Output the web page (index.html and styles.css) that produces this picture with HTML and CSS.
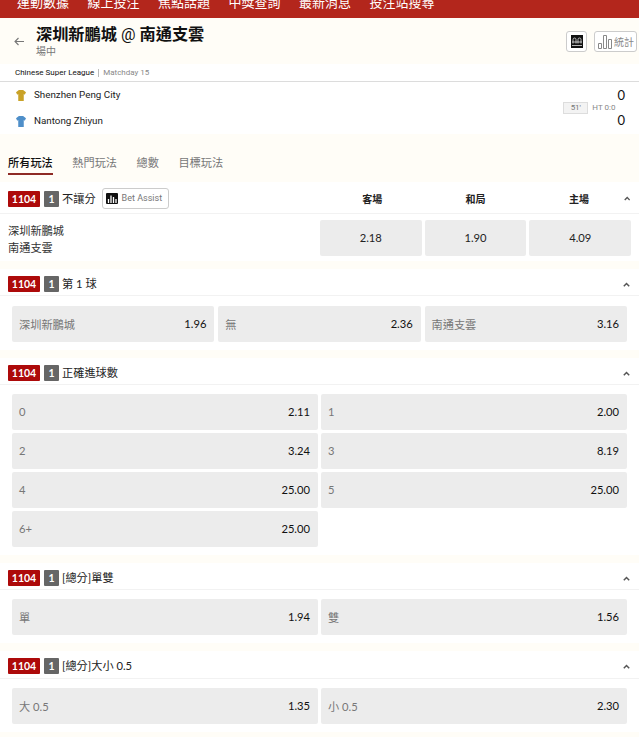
FILE: index.html
```html
<!DOCTYPE html>
<html lang="zh-Hant">
<head>
<meta charset="utf-8">
<title>深圳新鵬城 @ 南通支雲</title>
<link rel="stylesheet" href="styles.css">
</head>
<body>
<nav class="nav">
  <a>運動數據</a><a>線上投注</a><a>焦點話題</a><a>中獎查詢</a><a>最新消息</a><a>投注站搜尋</a>
</nav>
<header class="head">
  <svg class="back" width="10" height="9" viewBox="0 0 10 9"><path d="M10 4.500H1M4.500 1 1 4.500 4.500 8" fill="none" stroke="#777" stroke-width="1.100"/></svg>
  <div class="head-title">
    <h1>深圳新鵬城 <span class="at">@</span> 南通支雲</h1>
    <div class="status">場中</div>
  </div>
  <div class="head-tools">
    <span class="tool tool-icon"><svg width="12" height="13" viewBox="0 0 12 13"><rect width="12" height="13" fill="#111"/><path d="M1 10.500h10M2 8.500V4.500a1.500 1.500 0 0 1 3 0v4M7 8.500V4.500a1.500 1.500 0 0 1 3 0v4M1 7h10" fill="none" stroke="#ddd" stroke-width=".8"/></svg></span>
    <span class="tool tool-stats"><svg width="14" height="14" viewBox="0 0 14 14"><path d="M.5 8.500h3v5h-3zM5.500 .5h3v13h-3zM10.500 4.500h3v9h-3z" fill="none" stroke="#888"/></svg>統計</span>
  </div>
</header>
<div class="league"><b>Chinese Super League</b><i></i>Matchday 15</div>
<section class="match">
  <div class="teams">
    <div class="team"><svg width="10" height="13" viewBox="0 0 12 13"><path d="M3.500 0h5l3.500 2.500-1.500 3-1.200-.7V13H2.700V4.800L1.500 5.500 0 2.500z" fill="#c9a227"/></svg>Shenzhen Peng City</div>
    <div class="team"><svg width="10" height="13" viewBox="0 0 12 13"><path d="M3.500 0h5l3.500 2.500-1.500 3-1.200-.7V13H2.700V4.800L1.500 5.500 0 2.500z" fill="#4f8fc9"/></svg>Nantong Zhiyun</div>
  </div>
  <div class="time"><span class="minute">51'</span><span class="ht">HT 0:0</span></div>
  <div class="scores"><span>0</span><span>0</span></div>
</section>
<div class="tabs">
  <a class="active">所有玩法</a><a>熱門玩法</a><a>總數</a><a>目標玩法</a>
</div>

<section class="market">
  <div class="mh mh-first">
    <span class="code">1104</span><span class="num">1</span><span class="mt">不讓分</span>
    <span class="assist"><svg width="12" height="11" viewBox="0 0 12 11"><rect width="12" height="11" rx="1" fill="#111"/><path d="M2.500 10V6M5 10V2.500M7.500 10V4M10 10V6" stroke="#fff" stroke-width="1.300"/></svg>Bet Assist</span>
    <span class="cols"><span>客場</span><span>和局</span><span>主場</span></span>
    <svg class="chev" width="7" height="5" viewBox="0 0 7 5"><path d="M.8 4.200 3.500 1.500l2.700 2.700" fill="none" stroke="#555" stroke-width="1.500"/></svg>
  </div>
  <div class="row1x2">
    <div class="names"><span>深圳新鵬城</span><span>南通支雲</span></div>
    <div class="odds3"><span class="o c">2.18</span><span class="o c">1.90</span><span class="o c">4.09</span></div>
  </div>
</section>

<section class="market">
  <div class="mh"><span class="code">1104</span><span class="num">1</span><span class="mt">第 1 球</span><svg class="chev" width="7" height="5" viewBox="0 0 7 5"><path d="M.8 4.200 3.500 1.500l2.700 2.700" fill="none" stroke="#555" stroke-width="1.500"/></svg></div>
  <div class="grid g3">
    <span class="o"><em>深圳新鵬城</em><b>1.96</b></span>
    <span class="o"><em>無</em><b>2.36</b></span>
    <span class="o"><em>南通支雲</em><b>3.16</b></span>
  </div>
</section>

<section class="market">
  <div class="mh"><span class="code">1104</span><span class="num">1</span><span class="mt">正確進球數</span><svg class="chev" width="7" height="5" viewBox="0 0 7 5"><path d="M.8 4.200 3.500 1.500l2.700 2.700" fill="none" stroke="#555" stroke-width="1.500"/></svg></div>
  <div class="grid g2">
    <span class="o"><em>0</em><b>2.11</b></span>
    <span class="o"><em>1</em><b>2.00</b></span>
    <span class="o"><em>2</em><b>3.24</b></span>
    <span class="o"><em>3</em><b>8.19</b></span>
    <span class="o"><em>4</em><b>25.00</b></span>
    <span class="o"><em>5</em><b>25.00</b></span>
    <span class="o"><em>6+</em><b>25.00</b></span>
  </div>
</section>

<section class="market">
  <div class="mh"><span class="code">1104</span><span class="num">1</span><span class="mt">[總分]單雙</span><svg class="chev" width="7" height="5" viewBox="0 0 7 5"><path d="M.8 4.200 3.500 1.500l2.700 2.700" fill="none" stroke="#555" stroke-width="1.500"/></svg></div>
  <div class="grid g2">
    <span class="o"><em>單</em><b>1.94</b></span>
    <span class="o"><em>雙</em><b>1.56</b></span>
  </div>
</section>

<section class="market">
  <div class="mh"><span class="code">1104</span><span class="num">1</span><span class="mt">[總分]大小 0.5</span><svg class="chev" width="7" height="5" viewBox="0 0 7 5"><path d="M.8 4.200 3.500 1.500l2.700 2.700" fill="none" stroke="#555" stroke-width="1.500"/></svg></div>
  <div class="grid g2">
    <span class="o"><em>大 0.5</em><b>1.35</b></span>
    <span class="o"><em>小 0.5</em><b>2.30</b></span>
  </div>
</section>
</body>
</html>
```
FILE: styles.css
```css
* { box-sizing: border-box; }
html { height: 100%; overflow: hidden; }
body {
  margin: 0;
  height: 737px;
  overflow: hidden;
  background: #fffdf7;
  color: #111;
  font-family: Lato, "Noto Sans CJK TC", sans-serif;
  font-size: 12px;
}
.nav {
  height: 18px;
  background: #b3261c;
  display: flex;
  gap: 18.5px;
  padding-left: 17px;
  overflow: hidden;
  align-items: flex-end;
  color: #fff;
  font-size: 13px;
  line-height: 22px;
  white-space: nowrap;
}
.nav a { display: block; margin-bottom: 5px; }
.head {
  height: 46px;
  display: flex;
  align-items: center;
  padding: 0 2px 0 14px;
}
.back { margin-right: 12px; }
.head-title { flex: 1; }
.head h1 {
  margin: 0;
  font: 700 16.200px/20px "Roboto", "Noto Sans CJK TC", sans-serif;
}
.at { font-weight: 400; }
.status { font-size: 10px; line-height: 12px; color: #777; }
.head-tools { display: flex; gap: 7px; align-items: center; margin-top: 1px; }
.tool {
  display: flex;
  align-items: center;
  height: 21px;
  border: 1px solid #ccc;
  border-radius: 3px;
  background: #fff;
}
.tool-icon { width: 21px; justify-content: center; }
.tool-stats { width: 43px; padding-left: 3px; gap: 2px; font-size: 10px; color: #888; }
.league {
  height: 18px;
  background: #fff;
  border-bottom: 1px solid #dcdcdc;
  padding-left: 15px;
  font: 8px/18px Roboto, sans-serif;
  color: #888;
  display: flex;
  align-items: center;
}
.league b { font-weight: 400; color: #111; }
.league i { width: 1px; height: 8px; background: #bbb; margin: 0 4px; }
.match {
  height: 52px;
  background: #fff;
  display: flex;
  align-items: center;
  padding-right: 14px;
}
.teams { flex: 1; padding-left: 16px; }
.team {
  display: flex;
  align-items: center;
  gap: 8px;
  height: 26px;
  font: 400 9.800px/26px Roboto, sans-serif;
  color: #222;
}
.time { display: flex; align-items: center; gap: 4px; margin-right: 2px; }
.minute {
  width: 25px;
  height: 12px;
  border: 1px solid #ddd;
  background: #f3f3f3;
  color: #777;
  font: 8px/10px Roboto, sans-serif;
  text-align: center;
}
.ht { font: 8px/10px Roboto, sans-serif; color: #888; }
.scores { display: flex; flex-direction: column; gap: 6.500px; font: 13px/18px Lato, sans-serif; margin-top: -1px; }
.tabs {
  height: 48px;
  display: flex;
  gap: 19.500px;
  padding: 20px 0 0 8px;
  font-size: 11.200px;
  color: #777;
}
.tabs a { line-height: 18px; height: 21px; }
.tabs .active { color: #111; font-weight: 500; border-bottom: 2px solid #8e2a25; }
.market { background: #fff; margin-bottom: 8px; }
.mh {
  display: flex;
  align-items: center;
  padding: 7px 9px 3px 8px;
  border-bottom: 1px solid #f2f2f2;
}
.mh-first { height: 32px; padding-top: 2px; padding-bottom: 0; }
.chev { margin-left: auto; }
.code {
  flex: none;
  width: 32px;
  height: 16px;
  border-radius: 1px;
  background: #ad0a0a;
  color: #fff;
  font: 700 10.500px/16px Lato, sans-serif;
  text-align: center;
}
.num {
  flex: none;
  width: 15px;
  height: 16px;
  margin-left: 4px;
  border-radius: 1px;
  background: #666;
  color: #fff;
  font: 700 10.500px/16px Lato, sans-serif;
  text-align: center;
}
.mt { flex: none; margin-left: 3px; font-size: 11.200px; line-height: 16px; color: #222; white-space: nowrap; }
.assist {
  flex: none;
  display: flex;
  align-items: center;
  gap: 4px;
  height: 21px;
  margin-left: 6px;
  padding: 0 3px;
  width: 67px;
  border: 1px solid #ccc;
  border-radius: 3px;
  font: 9px/19px Roboto, sans-serif;
  color: #777;
  white-space: nowrap;
}
.cols { flex: none; display: flex; margin-left: 152px; width: 310px; font-size: 10px; font-weight: 700; color: #222; }
.cols span { flex: 1; text-align: center; }
.cols + .chev { margin-left: -7px; }
.row1x2 { display: flex; height: 47px; padding: 6px 8px 0 8px; }
.names { flex: 1; display: flex; flex-direction: column; font-size: 11.200px; line-height: 17px; padding-top: 2px; color: #333; }
.odds3 { display: flex; gap: 3.200px; width: 311px; height: 36px; }
.o { background: #ececec; border-radius: 2px; flex: 1; }
.c { display: flex; justify-content: center; align-items: center; font-size: 11.200px; color: #222; padding-bottom: 1px; }
.grid { display: grid; gap: 3px; padding: 9px 12px 8px; }
.g2 { grid-template-columns: 1fr 1fr; }
.g3 { grid-template-columns: 1fr 1fr 1fr; gap: 3.800px; padding-top: 10px; padding-bottom: 8px; }
.grid .o {
  height: 36px;
  display: flex;
  justify-content: space-between;
  align-items: center;
  padding: 0 8px 1px 7px;
}
.grid em { font-style: normal; font-size: 11.200px; color: #777; }
.grid b { font-weight: 400; font-size: 11.200px; color: #111; }
.market:last-child .mh { padding-bottom: 4px; }
```
